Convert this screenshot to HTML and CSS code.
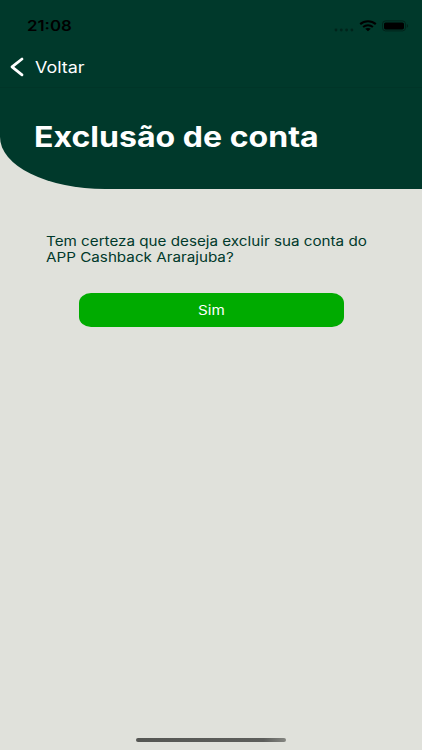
FILE: index.html
```html
<!DOCTYPE html>
<html lang="pt-BR">
<head>
    <meta charset="UTF-8">
    <meta name="viewport" content="width=device-width, initial-scale=1.0">
    <title>Exclusão de conta</title>
    <link rel="stylesheet" href="styles.css">
</head>
<body>
    <div class="screen">
        <header class="header">
            <div class="status-bar">
                <span class="time wide">21:08</span>
                <div class="status-icons">
                    <svg class="signal" width="20" height="4" viewBox="0 0 20 4">
                        <circle cx="2" cy="2" r="1.4"/>
                        <circle cx="7.3" cy="2" r="1.4"/>
                        <circle cx="12.6" cy="2" r="1.4"/>
                        <circle cx="17.9" cy="2" r="1.4"/>
                    </svg>
                    <svg class="wifi" width="18" height="12" viewBox="0 0 18 12">
                        <path d="M1.2 4.1 C5.6 0.3 12.4 0.3 16.8 4.1" stroke-width="2.1"/>
                        <path d="M4.1 6.9 C6.9 4.6 11.1 4.6 13.9 6.9" stroke-width="2"/>
                        <path class="dot" d="M6.2 8.8 C7.8 7.6 10.2 7.6 11.8 8.8 L9 11.2 Z"/>
                    </svg>
                    <svg class="battery" width="27" height="12" viewBox="0 0 27 12">
                        <rect class="shell" x="0.5" y="0.9" width="23" height="10" rx="3"/>
                        <rect x="2" y="2.4" width="20" height="7" rx="1.6"/>
                        <path class="cap" d="M24.8 4 C26.6 4.6 26.6 7.2 24.8 7.8 Z"/>
                    </svg>
                </div>
            </div>
            <a class="back" href="#">
                <svg width="14" height="20" viewBox="0 0 14 20">
                    <path d="M12 2 L2 9.9 L12 17.8"/>
                </svg>
                <span class="wide">Voltar</span>
            </a>
            <h1 class="wide">Exclusão de conta</h1>
        </header>

        <main class="content">
            <p class="wide">Tem certeza que deseja excluir sua conta do<br>APP Cashback Ararajuba?</p>
            <button type="button"><span class="wide">Sim</span></button>
        </main>

        <div class="home-indicator"></div>
    </div>
</body>
</html>
```

FILE: styles.css
```css
body {
    font-family: Inter, 'Liberation Sans', sans-serif;
    background-color: #e0e1db;
    margin: 0;
}
.screen {
    display: flex;
    flex-direction: column;
    height: 750px;
    overflow: hidden;
}
/* expanded lettering */
.wide {
    display: block;
    width: max-content;
    white-space: nowrap;
    transform: scaleX(1.17);
    transform-origin: left center;
}
.header {
    box-sizing: border-box;
    height: 189px;
    background-color: #00392b;
    border-bottom-left-radius: 105px 52px;
    color: #fff;
}
.status-bar {
    display: flex;
    align-items: center;
    justify-content: space-between;
    height: 51px;
    padding: 0 13px 0 27px;
    color: #000;
}
.time {
    font-size: 14px;
    font-weight: 600;
    transform: scaleX(1.2);
}
.status-icons {
    display: flex;
    align-items: center;
}
.signal {
    margin: 8px 5px 0 0;
    fill: #00241b;
}
.wifi {
    margin-right: 5px;
    fill: none;
    stroke: #000;
}
.wifi .dot {
    fill: #000;
    stroke: none;
}
.battery .shell {
    fill: none;
    stroke: #00241b;
}
.battery .cap {
    fill: #00241b;
}
.back {
    display: flex;
    align-items: center;
    gap: 11px;
    height: 32px;
    padding: 0 0 4px 10px;
    border-bottom: 1px solid #003528;
    color: #fff;
    font-size: 16px;
    text-decoration: none;
}
.back .wide {
    transform: scaleX(1.12);
}
.back path {
    fill: none;
    stroke: #fff;
    stroke-width: 2.8;
    stroke-linecap: round;
    stroke-linejoin: round;
}
h1 {
    margin: 32px 0 0 34px;
    font-size: 28px;
    font-weight: 700;
    line-height: 34px;
}
h1.wide {
    transform: scaleX(1.145);
}
.content {
    flex: 1;
    padding: 45px 78px 0 79px;
}
.content p {
    margin: 0 0 28px -33.5px;
    color: #00392b;
    font-size: 13px;
    line-height: 15.5px;
}
button {
    display: flex;
    align-items: center;
    justify-content: center;
    width: 100%;
    height: 34px;
    padding: 0;
    border: none;
    border-radius: 12px / 10px;
    background-color: #00ab00;
    color: #fff;
    font-family: inherit;
    font-size: 13px;
    cursor: pointer;
}
button .wide {
    transform-origin: center;
}
.home-indicator {
    align-self: center;
    width: 150px;
    height: 4px;
    margin-bottom: 8px;
    border-radius: 2px;
    background: linear-gradient(to right, #555653, #5d5e5b 85%, #858681);
}
```
